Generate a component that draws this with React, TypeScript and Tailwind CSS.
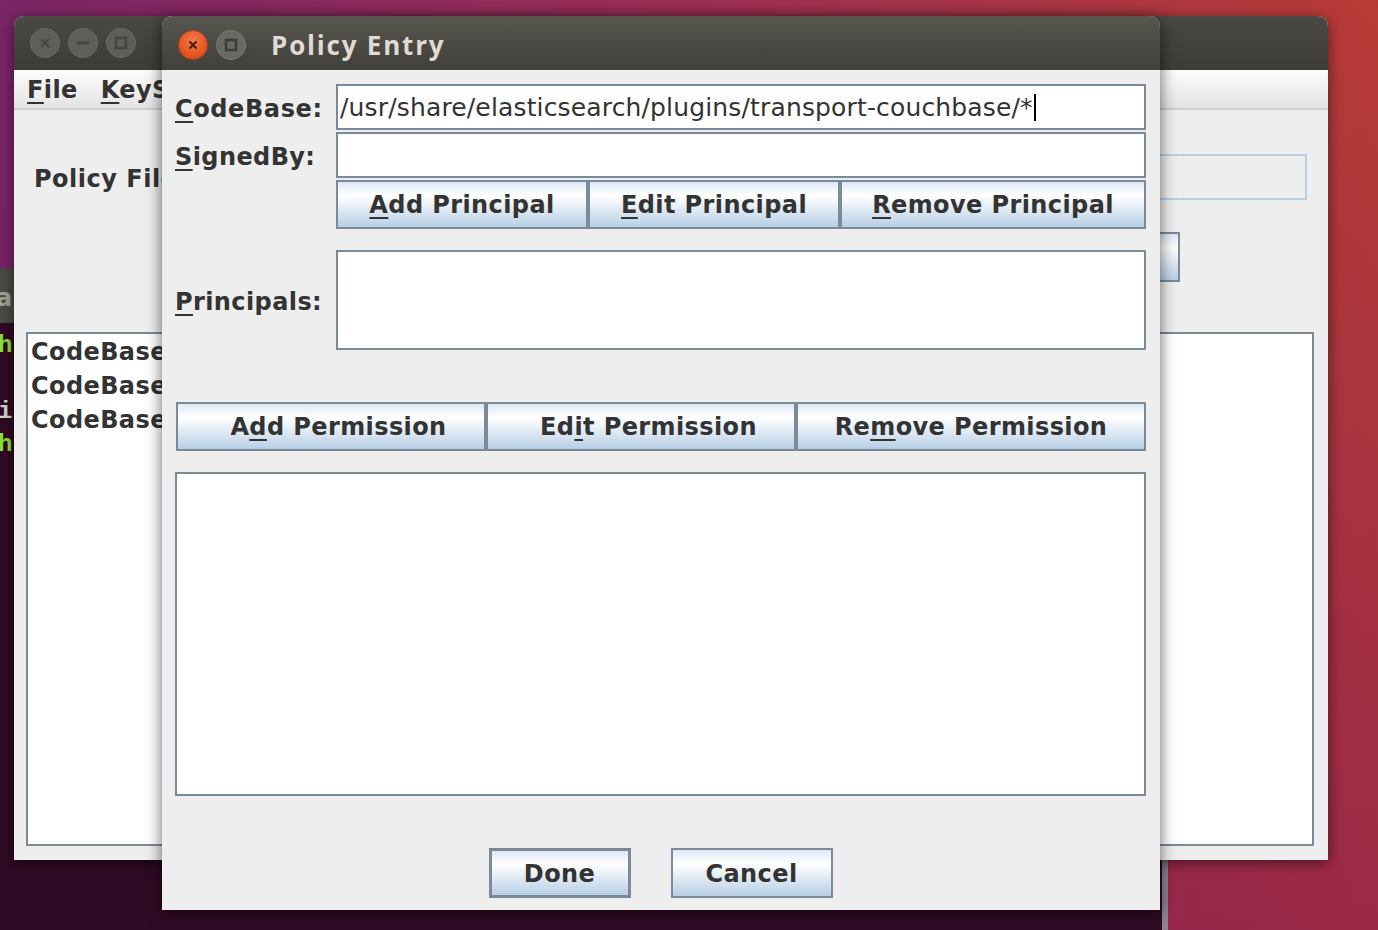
import React from 'react';

const Key = ({ children }: { children: React.ReactNode }) => (
  <span className="underline decoration-2 underline-offset-[4px]">{children}</span>
);

const JButton = ({ children, className = '' }: { children: React.ReactNode; className?: string }) => (
  <div
    className={
      'flex items-center justify-center border-2 border-[#7a8a99] bg-[linear-gradient(to_bottom,#dde8f3_0%,#ffffff_30%,#b8cfe5_100%)] text-[24px] font-bold text-[#333] tracking-[0.4px] whitespace-nowrap pt-[1px] ' +
      className
    }
  >
    {children}
  </div>
);

function TerminalWindow() {
  return (
    <div className="absolute left-0 top-[268px] w-[1168px] h-[680px] flex flex-col">
      <div className="h-[55px] bg-[#4b4a45] flex items-center text-[24px] font-bold text-[#a3a19a] overflow-hidden pt-[4px]">
        <span className="-ml-[4px]">ar</span>
      </div>
      <div className="flex-1 bg-[#300a24] border-r-[6px] border-[#8e8490] pt-[6px] font-['Liberation_Mono',monospace] font-bold text-[24px] leading-[33px]">
        <div className="-ml-[2px] text-[#8ae234]">h</div>
        <div className="h-[33px]" />
        <div className="-ml-[2px] text-[#d3d7cf]">i</div>
        <div className="-ml-[2px] text-[#8ae234]">h</div>
      </div>
    </div>
  );
}

function MainWindow() {
  return (
    <div className="absolute left-[14px] top-[16px] w-[1314px] h-[844px] flex flex-col bg-[#eeeeee] rounded-t-[10px] shadow-[0_3px_14px_rgba(0,0,0,0.55)]">
      <div className="h-[54px] rounded-t-[10px] bg-[linear-gradient(to_bottom,#4a4944,#3c3b37)] flex items-center pl-[16px] gap-[8px]">
        <div className="w-[30px] h-[30px] rounded-full bg-[#5f5e59] border border-[#6c6b66] flex items-center justify-center">
          <svg width="12" height="12" viewBox="0 0 12 12">
            <path d="M2 2 L10 10 M10 2 L2 10" stroke="#45443f" strokeWidth="2" />
          </svg>
        </div>
        <div className="w-[30px] h-[30px] rounded-full bg-[#5f5e59] border border-[#6c6b66] flex items-center justify-center">
          <svg width="14" height="14" viewBox="0 0 14 14">
            <path d="M1 7 H13" stroke="#45443f" strokeWidth="3" />
          </svg>
        </div>
        <div className="w-[30px] h-[30px] rounded-full bg-[#5f5e59] border border-[#6c6b66] flex items-center justify-center">
          <svg width="14" height="14" viewBox="0 0 14 14">
            <rect x="2" y="2" width="10" height="10" fill="none" stroke="#45443f" strokeWidth="2.5" />
          </svg>
        </div>
      </div>
      <div className="h-[40px] bg-[linear-gradient(to_bottom,#fcfcfc,#e4e4e4)] border-b-2 border-[#cfcfcf] flex items-center pl-[13px] gap-[23px] text-[24px] font-bold text-[#333] tracking-[0.4px] pt-[2px]">
        <span>
          <Key>F</Key>ile
        </span>
        <span>
          <Key>K</Key>eyStore
        </span>
      </div>
      <div className="flex-1 flex flex-col">
        <div className="mt-[44px] h-[46px] flex items-center">
          <span className="ml-[20px] pt-[3px] text-[24px] font-bold text-[#333] tracking-[0.5px]">Policy File:</span>
          <div className="ml-[30px] mr-[21px] flex-1 h-full border-2 border-[#b8cfe5]" />
        </div>
        <div className="mt-[32px] h-[50px] mx-[148px] flex">
          <JButton className="flex-1">Add Policy Entry</JButton>
          <JButton className="flex-1">Edit Policy Entry</JButton>
          <JButton className="flex-1">Remove Policy Entry</JButton>
        </div>
        <div className="mt-[50px] ml-[12px] mr-[14px] h-[514px] border-2 border-[#7a8a99] bg-white pl-[3px] pt-[1px] text-[24px] font-bold text-[#333] tracking-[0.4px] leading-[34px] overflow-hidden whitespace-nowrap">
          <div>CodeBase "file:/usr/share/elasticsearch/plugins/transport-couchbase/*"</div>
          <div>CodeBase "file:/usr/share/elasticsearch/lib/*"</div>
          <div>CodeBase "file:/usr/share/elasticsearch/plugins/*"</div>
        </div>
      </div>
    </div>
  );
}

function PolicyEntryDialog() {
  return (
    <div className="absolute left-[162px] top-[16px] w-[998px] h-[894px] flex flex-col bg-[#eeeeee] rounded-t-[10px] shadow-[0_3px_16px_rgba(0,0,0,0.6)]">
      <div className="h-[54px] rounded-t-[10px] bg-[linear-gradient(to_bottom,#57564f,#403f3a)] flex items-center pl-[16px] pt-[4px]">
        <div className="w-[30px] h-[30px] rounded-full bg-[radial-gradient(circle_at_50%_35%,#f47a4c,#e2501d_70%,#c7461a)] border border-[#b5401a] flex items-center justify-center">
          <svg width="12" height="12" viewBox="0 0 12 12">
            <path d="M2.5 2.5 L9.5 9.5 M9.5 2.5 L2.5 9.5" stroke="#4a200d" strokeWidth="2" />
          </svg>
        </div>
        <div className="ml-[8px] w-[30px] h-[30px] rounded-full bg-[#6a6964] border border-[#7a7974] flex items-center justify-center">
          <svg width="14" height="14" viewBox="0 0 14 14">
            <rect x="2" y="2" width="10" height="10" fill="none" stroke="#3c3b37" strokeWidth="2.5" />
          </svg>
        </div>
        <span className="ml-[25px] text-[26px] font-bold text-[#dfdbd2] font-['Open_Sans',sans-serif] tracking-[1.8px]">
          Policy Entry
        </span>
      </div>

      <div className="flex-1 flex flex-col pl-[13px] pr-[14px] pt-[14px] text-[#333]">
        <div className="flex h-[46px]">
          <div className="w-[161px] flex items-center pt-[4px] text-[24px] font-bold tracking-[0.6px]">
            <span>
              <Key>C</Key>odeBase:
            </span>
          </div>
          <div className="flex-1 border-2 border-[#7a8a99] bg-white flex items-center pl-[2px] pt-[1px] text-[25px] tracking-[0.15px] whitespace-nowrap">
            /usr/share/elasticsearch/plugins/transport-couchbase/*
            <span className="ml-[1px] w-[2px] h-[27px] bg-black" />
          </div>
        </div>
        <div className="mt-[2px] flex h-[46px]">
          <div className="w-[161px] flex items-center pt-[4px] text-[24px] font-bold tracking-[0.4px]">
            <span>
              <Key>S</Key>ignedBy:
            </span>
          </div>
          <div className="flex-1 border-2 border-[#7a8a99] bg-white" />
        </div>
        <div className="mt-[2px] flex h-[49px]">
          <div className="w-[161px]" />
          <div className="flex-1 flex">
            <JButton className="w-[252px]">
              <span>
                <Key>A</Key>dd Principal
              </span>
            </JButton>
            <JButton className="w-[252px]">
              <span>
                <Key>E</Key>dit Principal
              </span>
            </JButton>
            <JButton className="flex-1">
              <span>
                <Key>R</Key>emove Principal
              </span>
            </JButton>
          </div>
        </div>
        <div className="mt-[21px] flex h-[100px]">
          <div className="w-[161px] flex items-center pt-[4px] text-[24px] font-bold tracking-[0.4px]">
            <span>
              <Key>P</Key>rincipals:
            </span>
          </div>
          <div className="flex-1 border-2 border-[#7a8a99] bg-white" />
        </div>

        <div className="mt-[52px] ml-[1px] flex h-[49px]">
          <JButton className="w-[310px] pl-[15px]">
            <span>
              A<Key>d</Key>d Permission
            </span>
          </JButton>
          <JButton className="w-[310px] pl-[15px]">
            <span>
              Ed<Key>i</Key>t Permission
            </span>
          </JButton>
          <JButton className="flex-1">
            <span>
              Re<Key>m</Key>ove Permission
            </span>
          </JButton>
        </div>
        <div className="mt-[21px] h-[324px] border-2 border-[#7a8a99] bg-white" />

        <div className="mt-[52px] h-[50px] flex justify-center gap-[40px]">
          <JButton className="w-[142px] border-[3px]">Done</JButton>
          <JButton className="w-[162px]">Cancel</JButton>
        </div>
      </div>
    </div>
  );
}

export default function App() {
  return (
    <div className="relative w-[1378px] h-[930px] overflow-hidden font-['DejaVu_Sans',sans-serif] bg-[image:linear-gradient(to_bottom,rgba(120,20,90,0)_0%,rgba(120,20,90,0.45)_100%),linear-gradient(to_right,#7a2566_0%,#9c2f55_50%,#b83c36_100%)]">
      <TerminalWindow />
      <MainWindow />
      <PolicyEntryDialog />
    </div>
  );
}
